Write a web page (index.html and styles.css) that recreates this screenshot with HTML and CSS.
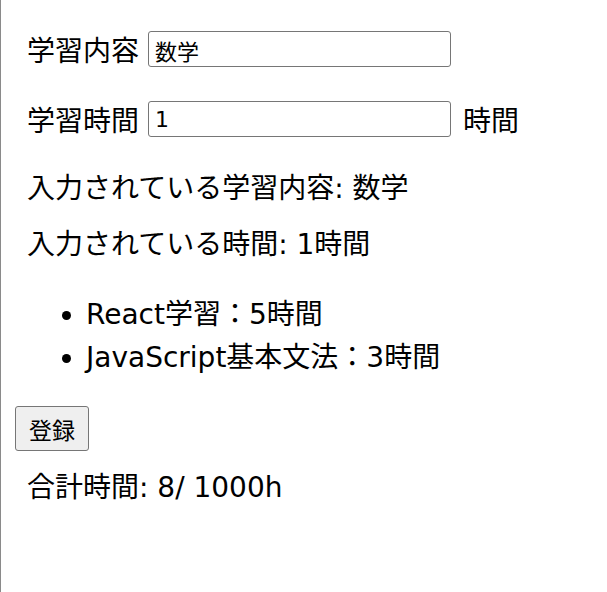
FILE: index.html
```html
<!DOCTYPE html>
<html lang="ja">
<head>
<meta charset="utf-8">
<title>学習記録</title>
<link rel="stylesheet" href="styles.css">
</head>
<body>
<div class="app">
  <div class="row row-first">
    <label class="label">学習内容</label>
    <input class="input" type="text" value="数学">
  </div>
  <div class="row row-second">
    <label class="label">学習時間</label>
    <input class="input" type="number" value="1">
    <span class="unit">時間</span>
  </div>
  <p class="line line-first">入力されている学習内容: 数学</p>
  <p class="line line-second">入力されている時間: 1時間</p>
  <ul class="records">
    <li>React学習：5時間</li>
    <li>JavaScript基本文法：3時間</li>
  </ul>
  <button class="btn" type="button">登録</button>
  <p class="line total">合計時間: 8/ 1000h</p>
</div>
</body>
</html>
```

FILE: styles.css
```css
html, body {
  margin: 0;
  padding: 0;
}
body {
  border-left: 1px solid #8a8a8a;
  min-height: 100vh;
  box-sizing: border-box;
  background: #fff;
  color: #000;
  font-family: "DejaVu Sans", "Noto Sans CJK JP", sans-serif;
}
.app {
  padding-left: 14px;
  padding-top: 31px;
}
.row {
  display: flex;
  align-items: center;
  height: 36px;
  padding-left: 12px;
}
.row-second {
  margin-top: 34px;
}
.label {
  font-size: 28px;
  line-height: 36px;
  padding-top: 5px;
  width: 121px;
  white-space: nowrap;
}
.input {
  box-sizing: border-box;
  width: 303px;
  height: 36px;
  margin: 0;
  padding: 1px 6px 0;
  border: 1px solid #767676;
  border-radius: 3px;
  font-family: "DejaVu Sans", "Noto Sans CJK JP", sans-serif;
  font-size: 22px;
  color: #000;
  background: #fff;
  -moz-appearance: textfield;
  appearance: textfield;
}
.input::-webkit-outer-spin-button,
.input::-webkit-inner-spin-button {
  -webkit-appearance: none;
  margin: 0;
}
.unit {
  font-size: 28px;
  line-height: 36px;
  padding-top: 5px;
  margin-left: 12px;
}
.line {
  margin: 0;
  padding-left: 12px;
  padding-top: 2px;
  font-size: 28px;
  line-height: 36px;
}
.line-first {
  margin-top: 32px;
}
.line-second {
  margin-top: 18px;
}
.records {
  margin: 28px 0 0 0;
  padding-top: 2px;
  padding-left: 71px;
  font-size: 28px;
  line-height: 43px;
}
.btn {
  display: block;
  box-sizing: border-box;
  margin-top: 27px;
  width: 74px;
  height: 45px;
  padding: 0;
  border: 1px solid #767676;
  border-radius: 3px;
  background: #efefef;
  color: #000;
  font-family: "DejaVu Sans", "Noto Sans CJK JP", sans-serif;
  font-size: 23px;
}
.total {
  margin-top: 17px;
}
```
